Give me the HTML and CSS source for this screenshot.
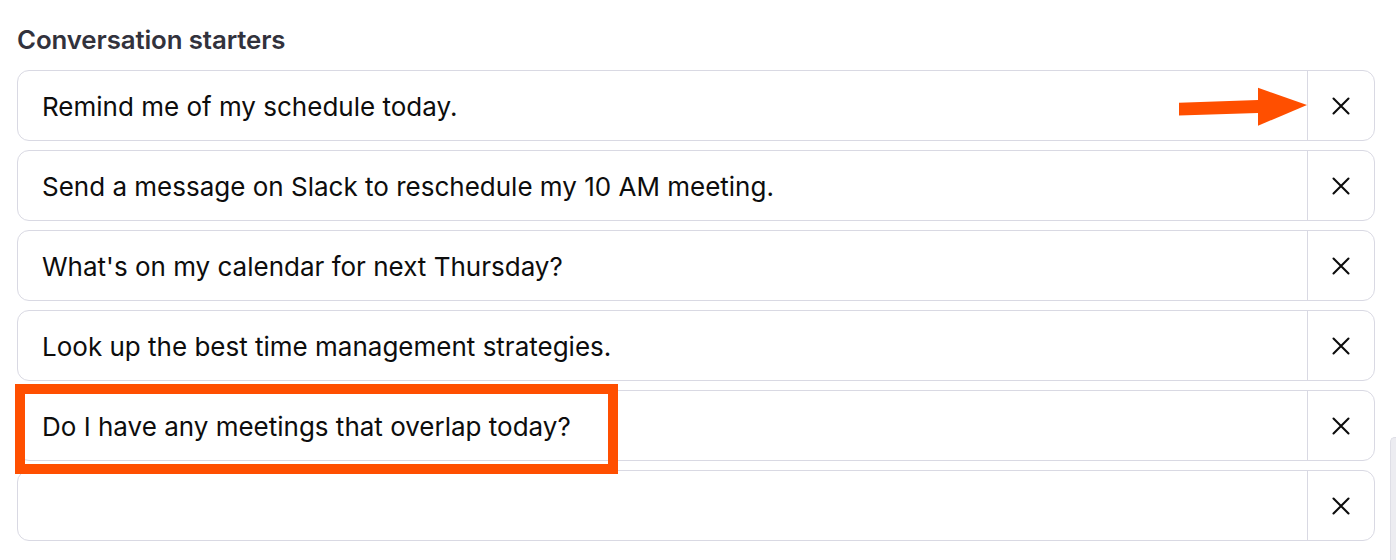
FILE: index.html
```html
<!DOCTYPE html>
<html lang="en">
<head>
<meta charset="utf-8">
<title>Conversation starters</title>
<link rel="stylesheet" href="styles.css">
</head>
<body>
<div class="page">
  <h2 class="title">Conversation starters</h2>
  <div class="list">
    <div class="row">
      <div class="text">Remind me of my schedule today.</div>
      <button class="remove" aria-label="Remove"><svg width="18" height="18" viewBox="0 0 18 18"><path d="M1.5 1.5L16.5 16.5M16.5 1.5L1.5 16.5" stroke="#0d0d0d" stroke-width="2.1" stroke-linecap="round" fill="none"/></svg></button>
    </div>
    <div class="row">
      <div class="text">Send a message on Slack to reschedule my 10 AM meeting.</div>
      <button class="remove" aria-label="Remove"><svg width="18" height="18" viewBox="0 0 18 18"><path d="M1.5 1.5L16.5 16.5M16.5 1.5L1.5 16.5" stroke="#0d0d0d" stroke-width="2.1" stroke-linecap="round" fill="none"/></svg></button>
    </div>
    <div class="row">
      <div class="text">What's on my calendar for next Thursday?</div>
      <button class="remove" aria-label="Remove"><svg width="18" height="18" viewBox="0 0 18 18"><path d="M1.5 1.5L16.5 16.5M16.5 1.5L1.5 16.5" stroke="#0d0d0d" stroke-width="2.1" stroke-linecap="round" fill="none"/></svg></button>
    </div>
    <div class="row">
      <div class="text">Look up the best time management strategies.</div>
      <button class="remove" aria-label="Remove"><svg width="18" height="18" viewBox="0 0 18 18"><path d="M1.5 1.5L16.5 16.5M16.5 1.5L1.5 16.5" stroke="#0d0d0d" stroke-width="2.1" stroke-linecap="round" fill="none"/></svg></button>
    </div>
    <div class="row">
      <div class="text">Do I have any meetings that overlap today?</div>
      <button class="remove" aria-label="Remove"><svg width="18" height="18" viewBox="0 0 18 18"><path d="M1.5 1.5L16.5 16.5M16.5 1.5L1.5 16.5" stroke="#0d0d0d" stroke-width="2.1" stroke-linecap="round" fill="none"/></svg></button>
    </div>
    <div class="row">
      <div class="text"></div>
      <button class="remove" aria-label="Remove"><svg width="18" height="18" viewBox="0 0 18 18"><path d="M1.5 1.5L16.5 16.5M16.5 1.5L1.5 16.5" stroke="#0d0d0d" stroke-width="2.1" stroke-linecap="round" fill="none"/></svg></button>
    </div>

    <svg class="arrow" width="130" height="40" viewBox="0 0 130 40">
      <polygon points="0,15.7 79,13 79,26 0,28.5" fill="#ff4f00"/>
      <polygon points="79,0.7 128,18 79,38.7" fill="#ff4f00"/>
    </svg>
    <div class="highlight"></div>
  </div>
  <div class="scrollbar"></div>
</div>
</body>
</html>
```

FILE: styles.css
```css
* {
  box-sizing: border-box;
}

html, body {
  margin: 0;
  padding: 0;
  background: #ffffff;
}

body {
  font-family: Inter, "Noto Sans", "Liberation Sans", sans-serif;
  color: #0d0d0d;
  width: 1396px;
  height: 560px;
  overflow: hidden;
}

.page {
  position: relative;
  height: 560px;
  padding: 25px 21px 0 17px;
}

.title {
  margin: 0 0 15px 0;
  font-size: 25.8px;
  line-height: 30px;
  font-weight: 600;
  color: #32323c;
  letter-spacing: -0.1px;
}

.list {
  position: relative;
  display: flex;
  flex-direction: column;
  gap: 9px;
}

.row {
  display: flex;
  height: 71px;
  border: 1px solid #d9d9e3;
  border-radius: 12px;
  background: #ffffff;
}

.text {
  flex: 1;
  display: flex;
  align-items: center;
  padding: 3px 0 0 24px;
  font-size: 26px;
  line-height: 30px;
  color: #0d0d0d;
}

.remove {
  width: 67px;
  flex: none;
  border: none;
  border-left: 1px solid #d9d9e3;
  background: transparent;
  display: flex;
  align-items: center;
  justify-content: center;
  padding: 0;
  margin: 0;
}

.arrow {
  position: absolute;
  left: 1162px;
  top: 17px;
}

.highlight {
  position: absolute;
  left: -2px;
  top: 314px;
  width: 603px;
  height: 90px;
  border: 10px solid #ff4f00;
}

.scrollbar {
  position: absolute;
  right: 0;
  top: 437px;
  width: 6px;
  bottom: 0;
  background: #ececf1;
  border-left: 1px solid #dedee6;
  border-top: 1px solid #dedee6;
  border-top-left-radius: 5px;
}
```
